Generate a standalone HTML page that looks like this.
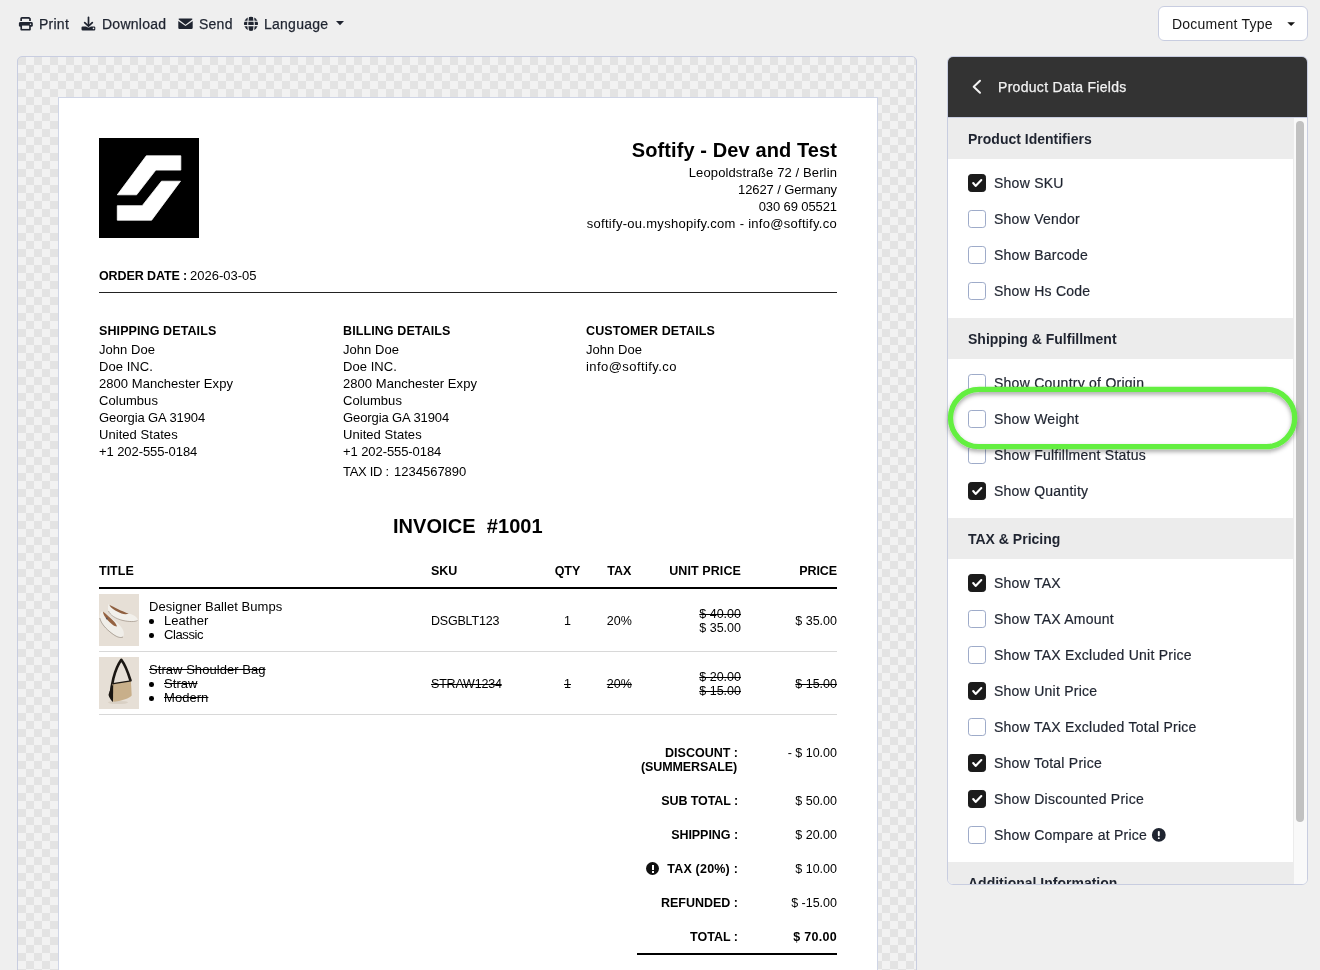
<!DOCTYPE html>
<html>
<head>
<meta charset="utf-8">
<style>
html,body{margin:0;padding:0;}
body{width:1320px;height:970px;overflow:hidden;position:relative;will-change:transform;background:#efefef;font-family:"Liberation Sans",sans-serif;color:#1f2430;}
.a{position:absolute;}
.t{position:absolute;white-space:nowrap;line-height:1;}
.r{text-align:right;}
/* toolbar */
.tb{font-size:14px;letter-spacing:0.25px;color:#1f2430;-webkit-text-stroke:0.25px #1f2430;}
/* canvas */
#canvas{left:17px;top:56px;width:898px;height:930px;border:1px solid #c8cde0;border-radius:5px;
 background-color:#e3e3e3;
 background-image:linear-gradient(45deg,#f2f2f2 25%,transparent 25%,transparent 75%,#f2f2f2 75%),linear-gradient(45deg,#f2f2f2 25%,transparent 25%,transparent 75%,#f2f2f2 75%);
 background-size:16px 16px;background-position:0 0,8px 8px;overflow:hidden;}
#paper{left:58px;top:97px;width:818px;height:900px;background:#fff;border:1px solid #cfd5e6;}
.d{color:#000;font-size:13px;}
.b{font-weight:bold;}
/* panel */
#panel{left:947px;top:56px;width:359px;height:827px;border:1px solid #c8cde0;border-radius:6px;background:#fff;overflow:hidden;}
.ph{color:#1f2430;font-size:14px;font-weight:bold;}
.pi{color:#1f2430;font-size:14px;letter-spacing:0.25px;-webkit-text-stroke:0.2px #1f2430;}
.cb{position:absolute;width:16px;height:16px;border:1px solid #9eabc9;border-radius:3.2px;background:#fff;}
.sh{position:absolute;width:345px;height:41px;background:#ececec;}
.cb.on{background:#1b1b1b;border-color:#1b1b1b;}
</style>
</head>
<body>
<!-- toolbar -->
<div class="t tb" style="left:39px;top:17px;">Print</div>
<div class="t tb" style="left:102px;top:17px;">Download</div>
<div class="t tb" style="left:199px;top:17px;">Send</div>
<div class="t tb" style="left:264px;top:17px;">Language</div>

<!-- document type button -->
<div class="a" style="left:1158px;top:6px;width:148px;height:33px;border:1px solid #c8cde0;border-radius:6px;background:#fff;"></div>
<div class="t" style="left:1172px;top:17px;font-size:14px;letter-spacing:0.23px;color:#151515;">Document Type</div>

<!-- canvas -->
<div id="canvas" class="a"></div>
<div id="paper" class="a"></div>

<!-- toolbar icons -->
<svg class="a" style="left:16px;top:14px" width="20" height="20" viewBox="0 0 20 20">
 <path d="M5.15 6.9V4.6Q5.15 3.8 5.95 3.8H12.9L14 4.9V6.9" fill="none" stroke="#1f2430" stroke-width="1.7"/>
 <rect x="2.9" y="8" width="13.9" height="4.8" rx="1.4" fill="#1f2430"/>
 <path d="M4.4 11.2H14.8V15.6Q14.8 16.5 13.9 16.5H5.3Q4.4 16.5 4.4 15.6Z" fill="#1f2430"/>
 <rect x="6.05" y="11.6" width="7.1" height="3.3" fill="#efefef"/>
 <circle cx="14.5" cy="10.3" r="0.75" fill="#efefef"/>
</svg>
<svg class="a" style="left:78px;top:14px" width="20" height="20" viewBox="0 0 20 20">
 <path d="M10.5 3.4V11.3" stroke="#1f2430" stroke-width="1.7" stroke-linecap="round"/>
 <path d="M6.7 8.6L10.5 12.1L14.3 8.6" fill="none" stroke="#1f2430" stroke-width="1.75" stroke-linecap="round" stroke-linejoin="round"/>
 <path d="M3.5 13.6Q3.5 12.4 4.7 12.4H8.1Q10.5 14.6 12.9 12.4H16.1Q17.3 12.4 17.3 13.6V15.3Q17.3 16.5 16.1 16.5H4.7Q3.5 16.5 3.5 15.3Z" fill="#1f2430"/>
 <circle cx="15.5" cy="14.4" r="0.8" fill="#efefef"/>
</svg>
<svg class="a" style="left:178px;top:17px" width="16" height="13" viewBox="0 0 16 13">
 <path d="M1.6 1.5H13.4Q15 1.5 14.3 2.6L7.5 7.8L0.7 2.6Q0 1.5 1.6 1.5Z" fill="#1f2430"/>
 <path d="M0.3 4.1L7.5 9.1L14.7 4.1V10.8Q14.7 12 13.5 12H1.5Q0.3 12 0.3 10.8Z" fill="#1f2430"/>
</svg>
<svg class="a" style="left:243px;top:16px" width="16" height="16" viewBox="0 0 16 16">
 <circle cx="8" cy="7.85" r="7.05" fill="#1f2430"/>
 <path d="M0.5 5.3H15.5M0.5 9.6H15.5" stroke="#efefef" stroke-width="1.1"/>
 <path d="M5.5 0.3Q3.9 7.85 5.5 15.4M10.5 0.3Q12.1 7.85 10.5 15.4" fill="none" stroke="#efefef" stroke-width="1.1"/>
</svg>
<svg class="a" style="left:335px;top:20px" width="10" height="6" viewBox="0 0 10 6"><path d="M1 1H9L5 5.2Z" fill="#1f2430"/></svg>
<svg class="a" style="left:1286px;top:21px" width="10" height="6" viewBox="0 0 10 6"><path d="M1.3 1.2H9L5.15 5Z" fill="#151515"/></svg>

<!-- logo -->
<svg class="a" style="left:99px;top:138px" width="100" height="100" viewBox="0 0 100 100">
 <rect width="100" height="100" fill="#000"/>
 <path d="M47.3 17.8H81.8V32.1H56.8L37.6 56.8H18.3Z" fill="#fff" stroke="#fff" stroke-width="0.8" stroke-linejoin="round"/>
 <path d="M62.5 43.2H81.5L52.6 82.2H18.3V67.7H43.2Z" fill="#fff" stroke="#fff" stroke-width="0.8" stroke-linejoin="round"/>
</svg>
<!-- product images -->
<svg class="a" style="left:99px;top:594px" width="40" height="52" viewBox="0 0 40 52">
 <rect width="40" height="52" fill="#e6dfd6"/>
 <path d="M9.3 10.2C14 12.5 24 17.5 30 19.6C34 21 37.5 22.5 38.7 25.2C39 27 37 27.8 34.5 27.7C30 27.6 22 26.5 15 23.5C11.5 22 9.8 19.5 9.2 16.5C8.8 14 8.9 11.5 9.3 10.2Z" fill="#f2f0eb"/>
 <path d="M10.3 10.8C15 13.3 23 17.3 29.8 19.7C27.5 20.3 25 20.3 22.5 19.5C18 17.8 14 15.5 11.6 13Z" fill="#8f6040"/>
 <path d="M9.5 17C11 21 16 24.5 24 26.5C30 27.8 36 28 38.5 26.5" fill="none" stroke="#7a6a5c" stroke-width="0.7" opacity="0.7"/>
 <path d="M3.1 17.3C6 19.5 11 23 14.6 25.7C18 28.5 21 31 22.5 33.5C24.5 36 25.6 39.5 24.5 42C23.5 44 21 44.2 19 43.2C15 41 12 38.5 10 37C6.5 34 3.5 31 1.5 27C0.3 24.5 0.5 21 1.5 19C2 18 2.6 17.5 3.1 17.3Z" fill="#f0eee9"/>
 <path d="M3.9 17.6C7.5 20.5 12 24.5 15 27.5C16.5 29 17.5 31 18 32.5C16.3 32.5 15 32 13.6 30.8C10 28 7 24.5 5.3 21.8C4.6 20.5 4 19 3.9 17.6Z" fill="#956342"/>
 <path d="M0.8 24C2 29.5 7 35 13 39.5C17 42.5 21 44.5 24 43" fill="none" stroke="#6d5d50" stroke-width="0.7" opacity="0.7"/>
 <circle cx="7.8" cy="24.5" r="0.9" fill="#3b4660" opacity="0.7"/>
</svg>
<svg class="a" style="left:99px;top:657px" width="40" height="52" viewBox="0 0 40 52">
 <rect width="40" height="52" fill="#e6dfd6"/>
 <ellipse cx="19" cy="45.5" rx="10" ry="1.6" fill="#d9d0c4"/>
 <path d="M11.8 39C12 30 15 13 22.3 2.8C25.5 7 29 15.5 31.5 23.5" fill="none" stroke="#1a1612" stroke-width="2.6" stroke-linecap="round" stroke-linejoin="round"/>
 <path d="M13 26.6L31.9 23.8L32.7 38.5C30.5 41.5 23 43.5 15.5 44.8L13 44.2Z" fill="#c8af8a"/>
 <path d="M12.8 26.8L31.9 23.8" stroke="#1a1612" stroke-width="1.3"/>
 <path d="M9.5 38C10.5 41 12 43.5 14 45L14.2 27C12.2 30 10.5 33.5 9.5 38Z" fill="#1a1612"/>
</svg>
<!--DOC-->
<div class="t d" style="right:483px;top:140px;font-size:20px;font-weight:bold;letter-spacing:0.1px;">Softify - Dev and Test</div>
<div class="t d" style="right:483px;top:166px;font-size:13px;letter-spacing:0.12px;">Leopoldstraße 72 / Berlin</div>
<div class="t d" style="right:483px;top:183px;font-size:13px;letter-spacing:-0.1px;">12627 / Germany</div>
<div class="t d" style="right:483px;top:200px;font-size:13px;letter-spacing:-0.1px;">030 69 05521</div>
<div class="t d" style="right:483px;top:217px;font-size:13px;letter-spacing:0.29px;">softify-ou.myshopify.com - info@softify.co</div>
<div class="t d" style="left:99px;top:270px;font-size:12.5px;font-weight:bold;letter-spacing:-0.1px;">ORDER DATE :</div>
<div class="t d" style="left:190px;top:269px;font-size:13px;letter-spacing:0px;">2026-03-05</div>
<div class="a" style="left:99px;top:292px;width:738px;height:1px;background:#222;"></div>
<div class="t d" style="left:99px;top:325px;font-size:12.5px;font-weight:bold;letter-spacing:0.1px;">SHIPPING DETAILS</div>
<div class="t d" style="left:99px;top:343px;font-size:13px;letter-spacing:0.05px;">John Doe</div>
<div class="t d" style="left:99px;top:360px;font-size:13px;letter-spacing:0.05px;">Doe INC.</div>
<div class="t d" style="left:99px;top:377px;font-size:13px;letter-spacing:0.05px;">2800 Manchester Expy</div>
<div class="t d" style="left:99px;top:394px;font-size:13px;letter-spacing:0.05px;">Columbus</div>
<div class="t d" style="left:99px;top:411px;font-size:13px;letter-spacing:-0.1px;">Georgia GA 31904</div>
<div class="t d" style="left:99px;top:428px;font-size:13px;letter-spacing:0.05px;">United States</div>
<div class="t d" style="left:99px;top:445px;font-size:13px;letter-spacing:-0.08px;">+1 202-555-0184</div>
<div class="t d" style="left:343px;top:325px;font-size:12.5px;font-weight:bold;letter-spacing:0.1px;">BILLING DETAILS</div>
<div class="t d" style="left:343px;top:343px;font-size:13px;letter-spacing:0.05px;">John Doe</div>
<div class="t d" style="left:343px;top:360px;font-size:13px;letter-spacing:0.05px;">Doe INC.</div>
<div class="t d" style="left:343px;top:377px;font-size:13px;letter-spacing:0.05px;">2800 Manchester Expy</div>
<div class="t d" style="left:343px;top:394px;font-size:13px;letter-spacing:0.05px;">Columbus</div>
<div class="t d" style="left:343px;top:411px;font-size:13px;letter-spacing:-0.1px;">Georgia GA 31904</div>
<div class="t d" style="left:343px;top:428px;font-size:13px;letter-spacing:0.05px;">United States</div>
<div class="t d" style="left:343px;top:445px;font-size:13px;letter-spacing:-0.08px;">+1 202-555-0184</div>
<div class="t d" style="left:586px;top:325px;font-size:12.5px;font-weight:bold;letter-spacing:0.1px;">CUSTOMER DETAILS</div>
<div class="t d" style="left:586px;top:343px;font-size:13px;letter-spacing:0.05px;">John Doe</div>
<div class="t d" style="left:586px;top:360px;font-size:13px;letter-spacing:0.43px;">info@softify.co</div>
<div class="t d" style="left:343px;top:465px;font-size:13px;letter-spacing:-0.3px;">TAX ID :</div>
<div class="t d" style="left:394px;top:465px;font-size:13px;letter-spacing:0px;">1234567890</div>
<div class="t d" style="left:393px;top:516px;font-size:20px;font-weight:bold;letter-spacing:0.05px;">INVOICE&nbsp;&nbsp;#1001</div>
<div class="t d" style="left:99px;top:565px;font-size:12.5px;font-weight:bold;">TITLE</div>
<div class="t d" style="left:431px;top:565px;font-size:12.5px;font-weight:bold;">SKU</div>
<div class="t d" style="left:537.5px;width:60px;text-align:center;top:565px;font-size:12.5px;font-weight:bold;">QTY</div>
<div class="t d" style="left:589.3px;width:60px;text-align:center;top:565px;font-size:12.5px;font-weight:bold;">TAX</div>
<div class="t d" style="right:579px;top:565px;font-size:12.5px;font-weight:bold;letter-spacing:0.1px;">UNIT PRICE</div>
<div class="t d" style="right:483px;top:565px;font-size:12.5px;font-weight:bold;letter-spacing:-0.1px;">PRICE</div>
<div class="a" style="left:99px;top:587px;width:738px;height:2px;background:#000;"></div>
<div class="t d" style="left:149px;top:600px;font-size:13px;letter-spacing:0.05px;">Designer Ballet Bumps</div>
<div class="a" style="left:149px;top:619px;width:4.6px;height:4.6px;border-radius:50%;background:#000;"></div>
<div class="t d" style="left:164px;top:614px;font-size:13px;letter-spacing:0.05px;">Leather</div>
<div class="a" style="left:149px;top:633px;width:4.6px;height:4.6px;border-radius:50%;background:#000;"></div>
<div class="t d" style="left:164px;top:628px;font-size:13px;letter-spacing:-0.4px;">Classic</div>
<div class="t d" style="left:431px;top:615px;font-size:12.5px;letter-spacing:-0.2px;">DSGBLT123</div>
<div class="t d" style="left:547.5px;width:40px;text-align:center;top:615px;font-size:12.5px;">1</div>
<div class="t d" style="left:599.3px;width:40px;text-align:center;top:615px;font-size:12.5px;">20%</div>
<div class="t d" style="right:579px;top:608px;font-size:12.5px;text-decoration:line-through;">$ 40.00</div>
<div class="t d" style="right:579px;top:622px;font-size:12.5px;">$ 35.00</div>
<div class="t d" style="right:483px;top:615px;font-size:12.5px;">$ 35.00</div>
<div class="a" style="left:99px;top:651px;width:738px;height:1px;background:#d8d8d8;"></div>
<div class="t d" style="left:149px;top:663px;font-size:13px;letter-spacing:0.05px;text-decoration:line-through;">Straw Shoulder Bag</div>
<div class="a" style="left:149px;top:682px;width:4.6px;height:4.6px;border-radius:50%;background:#000;"></div>
<div class="t d" style="left:164px;top:677px;font-size:13px;letter-spacing:0.05px;text-decoration:line-through;">Straw</div>
<div class="a" style="left:149px;top:696px;width:4.6px;height:4.6px;border-radius:50%;background:#000;"></div>
<div class="t d" style="left:164px;top:691px;font-size:13px;letter-spacing:0.05px;text-decoration:line-through;">Modern</div>
<div class="t d" style="left:431px;top:678px;font-size:12.5px;letter-spacing:-0.2px;text-decoration:line-through;">STRAW1234</div>
<div class="t d" style="left:547.5px;width:40px;text-align:center;top:678px;font-size:12.5px;text-decoration:line-through;">1</div>
<div class="t d" style="left:599.3px;width:40px;text-align:center;top:678px;font-size:12.5px;text-decoration:line-through;">20%</div>
<div class="t d" style="right:579px;top:671px;font-size:12.5px;text-decoration:line-through;">$ 20.00</div>
<div class="t d" style="right:579px;top:685px;font-size:12.5px;text-decoration:line-through;">$ 15.00</div>
<div class="t d" style="right:483px;top:678px;font-size:12.5px;text-decoration:line-through;">$ 15.00</div>
<div class="a" style="left:99px;top:714px;width:738px;height:1px;background:#d8d8d8;"></div>
<div class="t d" style="right:582px;top:747px;font-size:12.5px;font-weight:bold;letter-spacing:0px;">DISCOUNT :</div>
<div class="t d" style="right:483px;top:747px;font-size:12.5px;letter-spacing:0px;">- $ 10.00</div>
<div class="t d" style="right:582px;top:795px;font-size:12.5px;font-weight:bold;letter-spacing:-0.1px;">SUB TOTAL :</div>
<div class="t d" style="right:483px;top:795px;font-size:12.5px;letter-spacing:0px;">$ 50.00</div>
<div class="t d" style="right:582px;top:829px;font-size:12.5px;font-weight:bold;letter-spacing:-0.05px;">SHIPPING :</div>
<div class="t d" style="right:483px;top:829px;font-size:12.5px;letter-spacing:0px;">$ 20.00</div>
<div class="t d" style="right:582px;top:863px;font-size:12.5px;font-weight:bold;letter-spacing:0.2px;">TAX (20%) :</div>
<div class="t d" style="right:483px;top:863px;font-size:12.5px;letter-spacing:0px;">$ 10.00</div>
<div class="t d" style="right:582px;top:897px;font-size:12.5px;font-weight:bold;letter-spacing:0px;">REFUNDED :</div>
<div class="t d" style="right:483px;top:897px;font-size:12.5px;letter-spacing:0px;">$ -15.00</div>
<div class="t d" style="right:582px;top:931px;font-size:12.5px;font-weight:bold;letter-spacing:0px;">TOTAL :</div>
<div class="t d" style="right:483px;top:931px;font-size:12.5px;font-weight:bold;letter-spacing:0.3px;">$ 70.00</div>
<div class="t d" style="right:583px;top:761px;font-size:12.5px;font-weight:bold;letter-spacing:-0.1px;">(SUMMERSALE)</div>
<div class="a" style="left:646px;top:862px;width:13px;height:13px;border-radius:50%;background:#111;"></div>
<div class="a" style="left:651.5px;top:865px;width:2px;height:5px;background:#fff;"></div>
<div class="a" style="left:651.5px;top:871px;width:2px;height:2px;background:#fff;"></div>
<div class="a" style="left:637px;top:953px;width:200px;height:2px;background:#000;"></div>

<!--/DOC-->

<!-- panel -->
<div id="panel" class="a">
 <div class="a" style="left:0;top:0;width:359px;height:60px;background:#333;border-bottom:1px solid #c8cde0;"></div>
 <svg class="a" style="left:24px;top:22px" width="12" height="16" viewBox="0 0 12 16"><path d="M8 1.8 L1.7 7.8 L8 13.8" fill="none" stroke="#f2f2f2" stroke-width="2" stroke-linecap="round" stroke-linejoin="round"/></svg>
 <div class="t" style="left:50px;top:23px;font-size:14px;letter-spacing:0.3px;color:#f2f2f2;-webkit-text-stroke:0.25px #f2f2f2;">Product Data Fields</div>
<div class="a sh" style="left:0;top:61px;"></div>
<div class="t ph" style="left:20px;top:75px;">Product Identifiers</div>
<div class="cb on" style="left:20px;top:117px;"><svg width="18" height="18" viewBox="0 0 18 18" style="position:absolute;left:-1px;top:-1px"><path d="M5.2 9 L7.6 11.9 L13.3 6" fill="none" stroke="#fff" stroke-width="2.1" stroke-linecap="round" stroke-linejoin="round"/></svg></div>
<div class="t pi" style="left:46px;top:119px;">Show SKU</div>
<div class="cb" style="left:20px;top:153px;"></div>
<div class="t pi" style="left:46px;top:155px;">Show Vendor</div>
<div class="cb" style="left:20px;top:189px;"></div>
<div class="t pi" style="left:46px;top:191px;">Show Barcode</div>
<div class="cb" style="left:20px;top:225px;"></div>
<div class="t pi" style="left:46px;top:227px;">Show Hs Code</div>
<div class="a sh" style="left:0;top:261px;"></div>
<div class="t ph" style="left:20px;top:275px;">Shipping &amp; Fulfillment</div>
<div class="cb" style="left:20px;top:317px;"></div>
<div class="t pi" style="left:46px;top:319px;">Show Country of Origin</div>
<div class="cb" style="left:20px;top:353px;"></div>
<div class="t pi" style="left:46px;top:355px;">Show Weight</div>
<div class="cb" style="left:20px;top:389px;"></div>
<div class="t pi" style="left:46px;top:391px;">Show Fulfillment Status</div>
<div class="cb on" style="left:20px;top:425px;"><svg width="18" height="18" viewBox="0 0 18 18" style="position:absolute;left:-1px;top:-1px"><path d="M5.2 9 L7.6 11.9 L13.3 6" fill="none" stroke="#fff" stroke-width="2.1" stroke-linecap="round" stroke-linejoin="round"/></svg></div>
<div class="t pi" style="left:46px;top:427px;">Show Quantity</div>
<div class="a sh" style="left:0;top:461px;"></div>
<div class="t ph" style="left:20px;top:475px;">TAX &amp; Pricing</div>
<div class="cb on" style="left:20px;top:517px;"><svg width="18" height="18" viewBox="0 0 18 18" style="position:absolute;left:-1px;top:-1px"><path d="M5.2 9 L7.6 11.9 L13.3 6" fill="none" stroke="#fff" stroke-width="2.1" stroke-linecap="round" stroke-linejoin="round"/></svg></div>
<div class="t pi" style="left:46px;top:519px;">Show TAX</div>
<div class="cb" style="left:20px;top:553px;"></div>
<div class="t pi" style="left:46px;top:555px;">Show TAX Amount</div>
<div class="cb" style="left:20px;top:589px;"></div>
<div class="t pi" style="left:46px;top:591px;">Show TAX Excluded Unit Price</div>
<div class="cb on" style="left:20px;top:625px;"><svg width="18" height="18" viewBox="0 0 18 18" style="position:absolute;left:-1px;top:-1px"><path d="M5.2 9 L7.6 11.9 L13.3 6" fill="none" stroke="#fff" stroke-width="2.1" stroke-linecap="round" stroke-linejoin="round"/></svg></div>
<div class="t pi" style="left:46px;top:627px;">Show Unit Price</div>
<div class="cb" style="left:20px;top:661px;"></div>
<div class="t pi" style="left:46px;top:663px;">Show TAX Excluded Total Price</div>
<div class="cb on" style="left:20px;top:697px;"><svg width="18" height="18" viewBox="0 0 18 18" style="position:absolute;left:-1px;top:-1px"><path d="M5.2 9 L7.6 11.9 L13.3 6" fill="none" stroke="#fff" stroke-width="2.1" stroke-linecap="round" stroke-linejoin="round"/></svg></div>
<div class="t pi" style="left:46px;top:699px;">Show Total Price</div>
<div class="cb on" style="left:20px;top:733px;"><svg width="18" height="18" viewBox="0 0 18 18" style="position:absolute;left:-1px;top:-1px"><path d="M5.2 9 L7.6 11.9 L13.3 6" fill="none" stroke="#fff" stroke-width="2.1" stroke-linecap="round" stroke-linejoin="round"/></svg></div>
<div class="t pi" style="left:46px;top:735px;">Show Discounted Price</div>
<div class="cb" style="left:20px;top:769px;"></div>
<div class="t pi" style="left:46px;top:771px;">Show Compare at Price</div>
<div class="a sh" style="left:0;top:805px;"></div>
<div class="t ph" style="left:20px;top:819px;">Additional Information</div>

 <div class="a" style="left:345px;top:61px;width:13px;height:770px;background:#f9f9f9;border-left:1px solid #ececec;"></div>
 <div class="a" style="left:348px;top:64px;width:8px;height:701px;background:#c1c1c1;border-radius:4px;"></div>
</div>

<!-- panel info icon -->
<svg class="a" style="left:1151px;top:827px" width="16" height="16" viewBox="0 0 16 16">
 <circle cx="7.8" cy="7.9" r="6.9" fill="#1f2430"/>
 <rect x="6.85" y="4" width="1.9" height="5.2" rx="0.9" fill="#fff"/>
 <rect x="6.85" y="10.3" width="1.9" height="1.8" rx="0.9" fill="#fff"/>
</svg>
<!-- green highlight -->
<svg class="a" style="left:935px;top:375px;overflow:visible" width="380" height="90" viewBox="0 0 380 90">
 <defs><filter id="sh" x="-10%" y="-50%" width="120%" height="200%"><feDropShadow dx="0" dy="2.5" stdDeviation="2.2" flood-color="#000" flood-opacity="0.35"/></filter></defs>
 <rect x="15.5" y="14.4" width="344.2" height="57.3" rx="28.65" fill="none" stroke="#63ef41" stroke-width="5.3" filter="url(#sh)"/>
</svg>
</body>
</html>
